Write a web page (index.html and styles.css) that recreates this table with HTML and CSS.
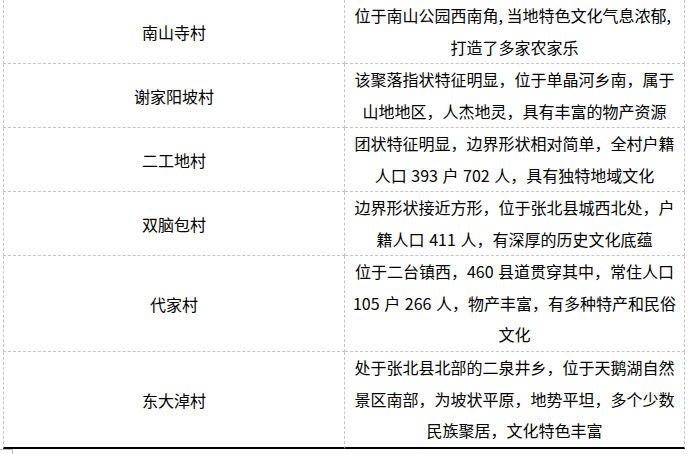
FILE: index.html
```html
<!DOCTYPE html>
<html lang="zh-CN">
<head>
<meta charset="utf-8">
<title>村落</title>
<link rel="stylesheet" href="styles.css">
</head>
<body>
<div class="table">
  <div class="cell name r2">南山寺村</div>
  <div class="cell desc r2">位于南山公园西南角<span class="hc">,</span>当地特色文化气息浓郁<span class="hc">,</span><br>打造了多家农家乐</div>

  <div class="cell name r2">谢家阳坡村</div>
  <div class="cell desc r2">该聚落指状特征明显，位于单晶河乡南，属于<br>山地地区，人杰地灵，具有丰富的物产资源</div>

  <div class="cell name r2">二工地村</div>
  <div class="cell desc r2">团状特征明显，边界形状相对简单，全村户籍<br>人口 393 户 702 人，具有独特地域文化</div>

  <div class="cell name r2">双脑包村</div>
  <div class="cell desc r2">边界形状接近方形，位于张北县城西北处，户<br>籍人口 411 人，有深厚的历史文化底蕴</div>

  <div class="cell name r3">代家村</div>
  <div class="cell desc r3">位于二台镇西，460 县道贯穿其中，常住人口<br>105 户 266 人，物产丰富，有多种特产和民俗<br>文化</div>

  <div class="cell name r3 last">东大淖村</div>
  <div class="cell desc r3 last">处于张北县北部的二泉井乡，位于天鹅湖自然<br>景区南部，为坡状平原，地势平坦，多个少数<br>民族聚居，文化特色丰富</div>
</div>
<div class="corner"></div>
</body>
</html>
```

FILE: styles.css
```css
html, body {
  margin: 0;
  padding: 0;
  background: #ffffff;
}

body {
  font-family: "Noto Sans CJK SC", "Noto Sans", sans-serif;
  font-size: 16px;
  color: #000000;
  overflow: hidden;
}

.table {
  display: grid;
  grid-template-columns: 342px 340px;
  width: 682px;
  margin-left: 3px;
}

.cell {
  box-sizing: border-box;
  display: flex;
  flex-direction: column;
  align-items: center;
  justify-content: center;
  text-align: center;
  border-bottom: 1px dashed #c4c4c4;
  border-right: 1px dashed #c4c4c4;
  line-height: 32px;
  white-space: nowrap;
  word-spacing: 1px;
}

.name {
  border-left: 1px dashed #c4c4c4;
}

.desc {
  display: block;
}

.r2 {
  height: 64px;
}

.r3 {
  height: 96px;
}

.desc.r2 {
  line-height: 31.5px;
}

.desc.r3 {
  line-height: 31.7px;
}

.last {
  height: 97px;
  border-bottom: 2px solid #000000;
}

.hc {
  display: inline-block;
  width: 8px;
  text-align: left;
}

.corner {
  width: 12px;
  height: 6px;
  border-top: 1px solid #bdbdbd;
  border-right: 1px solid #bdbdbd;
}
```
